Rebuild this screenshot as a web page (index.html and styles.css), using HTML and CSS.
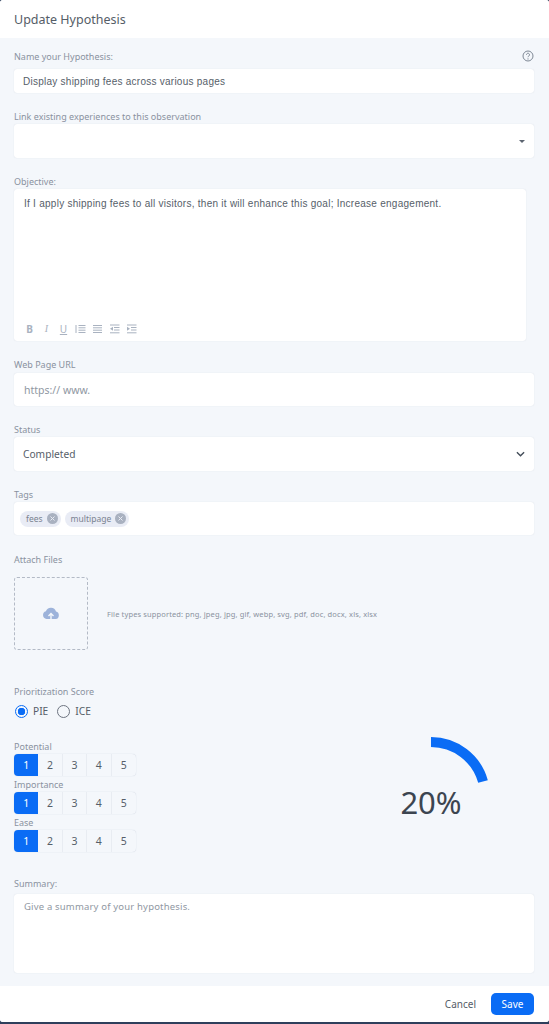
FILE: index.html
```html
<!DOCTYPE html>
<html lang="en">
<head>
  <meta charset="UTF-8">
  <meta name="viewport" content="width=device-width, initial-scale=1.0">
  <title>Update Hypothesis</title>
  <link rel="stylesheet" href="styles.css">
</head>
<body>
  <div class="modal">
    <header class="modal-head">Update Hypothesis</header>

    <main class="modal-body">
      <div class="field field-first">
        <div class="label-row">
          <label class="label gap-7">Name your Hypothesis:</label>
          <svg class="help" viewBox="0 0 12 12" width="12" height="12">
            <circle cx="6" cy="6" r="5" fill="none" stroke="#7d8794" stroke-width="1"/>
            <path d="M4.5 4.7a1.5 1.5 0 1 1 2.3 1.3c-.5.3-.8.6-.8 1.2" fill="none" stroke="#7d8794" stroke-width="1"/>
            <circle cx="6" cy="8.9" r=".6" fill="#7d8794"/>
          </svg>
        </div>
        <div class="box box-name">Display shipping fees across various pages</div>
      </div>

      <div class="field">
        <label class="label">Link existing experiences to this observation</label>
        <div class="box box-tall">
          <span class="caret"></span>
        </div>
      </div>

      <div class="field">
        <label class="label">Objective:</label>
        <div class="box editor">
          <div class="editor-text">If I apply shipping fees to all visitors, then it will enhance this goal; Increase engagement.</div>
          <div class="toolbar">
            <span class="tool tool-b">B</span>
            <span class="tool tool-i">I</span>
            <span class="tool tool-u">U</span>
            <svg viewBox="0 0 11 10" width="11" height="10"><path d="M1 1v8M3.5 1.5H10.500M3.500 3.800H10.500M3.500 6.200H10.500M3.500 8.500H10.500" stroke="#a9b2c0" fill="none"/></svg>
            <svg viewBox="0 0 11 10" width="11" height="10"><path d="M1 1.500H10M1 3.800H10M1 6.200H10M1 8.500H10" stroke="#a9b2c0" fill="none"/></svg>
            <svg viewBox="0 0 11 10" width="11" height="10"><path d="M1 1H10.500M5 3.500H10.500M5 6H10.500M1 8.800H10.500" stroke="#a9b2c0" fill="none"/><path d="M4 2.800 1 4.800 4 6.800Z" fill="#a9b2c0"/></svg>
            <svg viewBox="0 0 11 10" width="11" height="10"><path d="M1 1H10.500M5 3.500H10.500M5 6H10.500M1 8.800H10.500" stroke="#a9b2c0" fill="none"/><path d="M1 2.800 4 4.800 1 6.800Z" fill="#a9b2c0"/></svg>
          </div>
        </div>
      </div>

      <div class="field">
        <label class="label gap-3">Web Page URL</label>
        <div class="box box-url placeholder">https:// www.</div>
      </div>

      <div class="field">
        <label class="label">Status</label>
        <div class="box box-tall box-status">
          Completed
          <svg viewBox="0 0 10 6" width="9" height="6"><path d="M1 1l4 4 4-4" fill="none" stroke="#414b57" stroke-width="1.500"/></svg>
        </div>
      </div>

      <div class="field">
        <label class="label">Tags</label>
        <div class="box box-tags">
          <span class="tag">fees
            <svg viewBox="0 0 11 11" width="11" height="11"><circle cx="5.500" cy="5.500" r="5.500" fill="#a9b1c0"/><path d="M3.500 3.500l4 4M7.500 3.500l-4 4" stroke="#e9ecf5" stroke-width="1"/></svg>
          </span>
          <span class="tag">multipage
            <svg viewBox="0 0 11 11" width="11" height="11"><circle cx="5.500" cy="5.500" r="5.500" fill="#a9b1c0"/><path d="M3.500 3.500l4 4M7.500 3.500l-4 4" stroke="#e9ecf5" stroke-width="1"/></svg>
          </span>
        </div>
      </div>

      <div class="field field-attach">
        <label class="label gap-12">Attach Files</label>
        <div class="attach-row">
          <div class="dropzone">
            <svg viewBox="0 0 18 16" width="18" height="16">
              <path d="M4.500 13a4 4 0 0 1-.6-7.800A5.300 5.300 0 0 1 14 5.600 3.800 3.800 0 0 1 13.800 13Z" fill="#9db3da"/>
              <path d="M9 15V8M6.500 10 9 7.500 11.500 10" fill="none" stroke="#f4f7fb" stroke-width="1.400"/>
            </svg>
          </div>
          <span class="file-types">File types supported: png, jpeg, jpg, gif, webp, svg, pdf, doc, docx, xls, xlsx</span>
        </div>
      </div>

      <div class="field field-score">
        <label class="label gap-7">Prioritization Score</label>
        <div class="radios">
          <span class="radio radio-on"></span><span class="radio-text">PIE</span>
          <span class="radio"></span><span class="radio-text">ICE</span>
        </div>
      </div>

      <div class="score-row">
        <div class="scales">
          <label class="label gap-2">Potential</label>
          <div class="scale"><span class="on">1</span><span>2</span><span>3</span><span>4</span><span>5</span></div>
          <label class="label gap-2">Importance</label>
          <div class="scale"><span class="on">1</span><span>2</span><span>3</span><span>4</span><span>5</span></div>
          <label class="label gap-2">Ease</label>
          <div class="scale"><span class="on">1</span><span>2</span><span>3</span><span>4</span><span>5</span></div>
        </div>
        <div class="gauge">
          <svg viewBox="0 0 120 70" width="120" height="70">
            <path d="M60 5A54 54 0 0 1 112 44.500" fill="none" stroke="#0a6cf5" stroke-width="10"/>
          </svg>
          <div class="gauge-num">20%</div>
        </div>
      </div>

      <div class="field field-summary">
        <label class="label gap-5">Summary:</label>
        <div class="box box-summary placeholder">Give a summary of your hypothesis.</div>
      </div>
    </main>

    <footer class="modal-foot">
      <a href="#" class="cancel">Cancel</a>
      <a href="#" class="save">Save</a>
    </footer>
  </div>
</body>
</html>
```

FILE: styles.css
```css
* { box-sizing: border-box; }
html, body { height: 100%; }
body {
  margin: 0;
  background: #2f3f5c;
  font-family: "Noto Sans", sans-serif;
  color: #3f4853;
}
.modal {
  height: 1022px;
  display: flex;
  flex-direction: column;
  background: #f4f7fb;
  border-radius: 3px;
  overflow: hidden;
}
.modal-head {
  height: 38px;
  flex: none;
  display: flex;
  align-items: center;
  padding: 0 14px;
  background: white;
  font-size: 12.500px;
  color: #555d67;
}
.modal-body { flex: 1; padding: 12px 15px 0 14px; }
.field { margin-top: 17px; }
.field-first { margin-top: 0; }
.field-attach { margin-top: 18px; }
.field-score { margin-top: 35px; }
.field-summary { margin-top: 23px; }

.label-row { display: flex; justify-content: space-between; align-items: flex-start; }
.label {
  display: block;
  height: 12px;
  margin-bottom: 2px;
  font-size: 9px;
  line-height: 14px;
  color: #8a92a0;
}
.gap-2 { margin-bottom: 2px; }
.gap-3 { margin-bottom: 3px; }
.gap-5 { margin-bottom: 5px; }
.gap-7 { margin-bottom: 7px; }
.gap-12 { margin-bottom: 12px; }

.box {
  background: white;
  border-radius: 3px;
  box-shadow: 0 0 1px rgba(120,135,160,0.3);
  font-size: 10px;
}
.box-name {
  height: 24px;
  padding: 0 9px;
  display: flex;
  align-items: center;
  font-family: "Liberation Sans", sans-serif;
  font-size: 10px;
  letter-spacing: 0.25px;
  color: #565e69;
}
.box-tall { height: 34px; position: relative; }
.caret {
  position: absolute;
  right: 9px;
  top: 16px;
  border-left: 3px solid transparent;
  border-right: 3px solid transparent;
  border-top: 3px solid #5c6470;
}
.editor {
  width: 512px;
  height: 152px;
  padding: 9px 10px 0;
  display: flex;
  flex-direction: column;
  justify-content: space-between;
}
.editor-text {
  font-family: "Liberation Sans", sans-serif;
  font-size: 10px;
  letter-spacing: 0.26px;
  color: #565e69;
}
.toolbar { display: flex; align-items: center; gap: 6px; height: 12px; margin-bottom: 6px; }
.tool { width: 11px; text-align: center; font-size: 10px; line-height: 12px; color: #a9b2c0; }
.tool-b { font-weight: 700; }
.tool-i { font-family: "Liberation Serif", serif; font-style: italic; }
.tool-u { text-decoration: underline; }

.box-url { height: 33px; padding: 0 10px; display: flex; align-items: center; }
.placeholder { color: #8f97a2; font-size: 10.500px; }
.box-status {
  padding: 0 9px;
  display: flex;
  align-items: center;
  justify-content: space-between;
  font-size: 10.200px;
  color: #565e69;
}
.box-tags { height: 33px; padding: 0 6px; display: flex; align-items: center; gap: 4px; }
.tag {
  height: 16px;
  padding: 0 3px 0 6px;
  display: flex;
  align-items: center;
  gap: 4px;
  background: #e9ecf5;
  border-radius: 8px;
  font-size: 8.500px;
  color: #7a8290;
}

.attach-row { display: flex; align-items: center; gap: 19px; }
.dropzone {
  width: 74px;
  height: 73px;
  display: flex;
  align-items: center;
  justify-content: center;
  border: 1px dashed #b3bac6;
  border-radius: 3px;
}
.file-types { font-size: 7.500px; color: #8a92a0; letter-spacing: 0.13px; }

.radios { display: flex; align-items: center; height: 14px; font-size: 10.200px; color: #565e69; }
.radio {
  width: 13px;
  height: 13px;
  margin-right: 5px;
  border: 1.500px solid #6d7480;
  border-radius: 50%;
}
.radio-text { margin-right: 9px; }
.radio-on {
  margin-left: 1px;
  border-color: #0a6cf5;
  background: radial-gradient(circle, #0a6cf5 0 3.500px, transparent 4px);
}

.score-row { display: flex; margin-top: 22px; }
.scales { width: 122px; }
.scale {
  display: flex;
  height: 22px;
  margin-bottom: 2px;
  border-radius: 4px;
  box-shadow: 0 0 1px rgba(120,135,160,0.4);
}
.scale span {
  width: 24.400px;
  display: flex;
  align-items: center;
  justify-content: center;
  border-right: 1px solid #e8ecf2;
  font-size: 10.500px;
  color: #565e69;
}
.scale span:last-child { border-right: 0; }
.scale .on { background: #0a6cf5; color: white; border-radius: 4px 0 0 4px; border-right: 0; }
.gauge { margin: -3px 0 0 235px; width: 120px; }
.gauge svg { display: block; }
.gauge-num {
  margin-top: -23px;
  text-align: center;
  font-size: 31px;
  line-height: 36px;
  color: #3c4550;
}

.box-summary { height: 79px; padding: 6px 10px; font-size: 9.500px; letter-spacing: 0.18px; }

.modal-foot {
  height: 36px;
  flex: none;
  display: flex;
  align-items: center;
  justify-content: flex-end;
  gap: 15px;
  padding: 0 15px 0 0;
  background: white;
  font-size: 10px;
}
.cancel { color: #555d67; text-decoration: none; }
.save {
  width: 43px;
  height: 22px;
  display: flex;
  align-items: center;
  justify-content: center;
  background: #0a6cf5;
  border-radius: 5px;
  color: white;
  text-decoration: none;
}
```
